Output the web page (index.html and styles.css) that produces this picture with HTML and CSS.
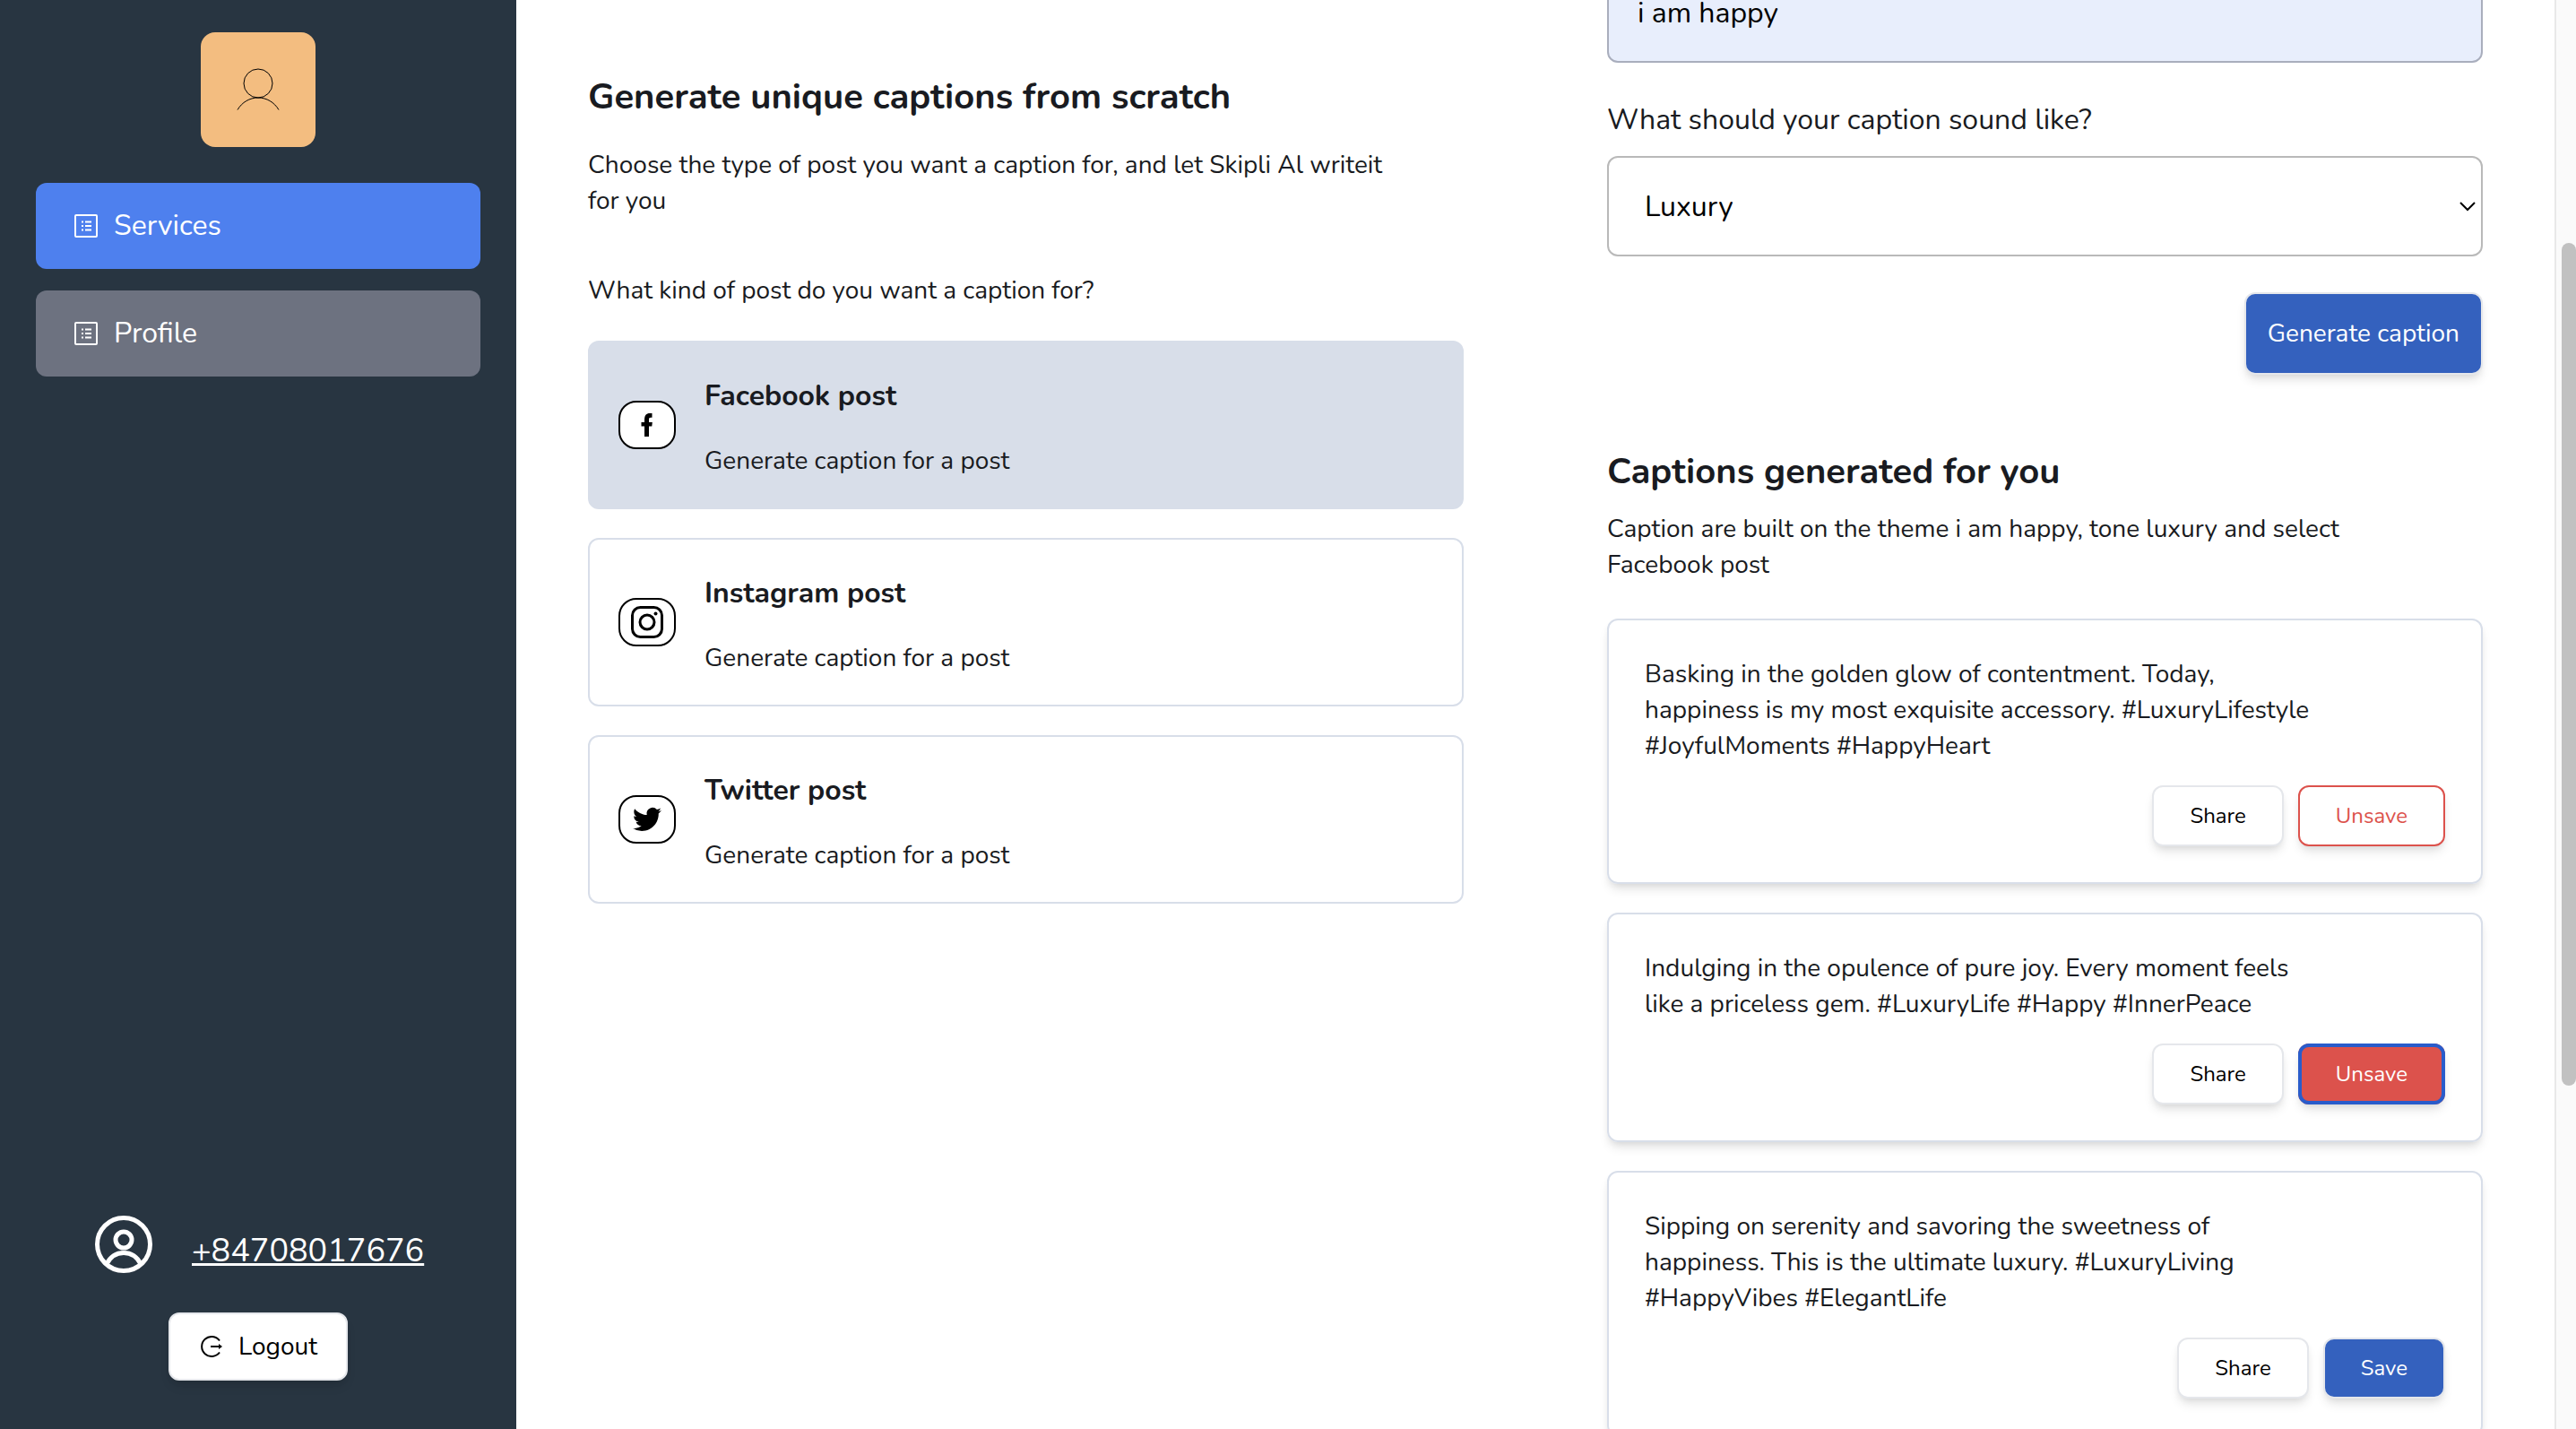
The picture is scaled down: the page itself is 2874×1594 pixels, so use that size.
FILE: index.html
```html
<!DOCTYPE html>
<html lang="en">
<head>
<meta charset="utf-8">
<title>Skipli AI - Services</title>
<link rel="stylesheet" href="styles.css">
</head>
<body>
<div class="app">
  <aside class="sidebar">
    <div class="avatar">
      <svg viewBox="0 0 48 48" width="48" height="48" fill="none" stroke="#000" stroke-width="1"><circle cx="24" cy="17" r="16"/><path d="M1 46.500C6 38 14.500 33 24 33s18 5 23 13.500"/></svg>
    </div>
    <nav class="nav">
      <a class="nav-item active" href="#services">
        <svg class="nav-icon" viewBox="0 0 26 26" width="26" height="26" fill="none" stroke="currentColor" stroke-width="2"><rect x="1" y="1" width="24" height="24" rx="1"/><path d="M12 8.500h7M12 13h7M12 17.500h7M8 8.500h2M8 13h2M8 17.500h2"/></svg>
        Services
      </a>
      <a class="nav-item" href="#profile">
        <svg class="nav-icon" viewBox="0 0 26 26" width="26" height="26" fill="none" stroke="currentColor" stroke-width="2"><rect x="1" y="1" width="24" height="24" rx="1"/><path d="M12 8.500h7M12 13h7M12 17.500h7M8 8.500h2M8 13h2M8 17.500h2"/></svg>
        Profile
      </a>
    </nav>
    <div class="account">
      <a class="phone" href="#account">
        <svg viewBox="0 0 64 64" width="64" height="64" fill="none" stroke="currentColor" stroke-width="5"><circle cx="32" cy="32" r="29.500"/><circle cx="32" cy="27" r="9"/><path d="M13 54c4-8 11-12.500 19-12.500S47 46 51 54"/></svg>
        <span class="phone-number">+84708017676</span>
      </a>
      <button class="btn logout" type="button">
        <svg viewBox="0 0 24 24" width="24" height="24" fill="none" stroke="#000" stroke-width="2"><path d="M21 5.500A11 11 0 1 0 21 18.500M11 12h10"/><path d="M20 9l4 3-4 3z" fill="#000" stroke="none"/></svg>
        Logout
      </button>
    </div>
  </aside>

  <main class="content">
    <section class="column picker">
      <h1 class="title">Generate unique captions from scratch</h1>
      <p class="text intro">Choose the type of post you want a caption for, and let Skipli Al writeit<br>for you</p>
      <p class="text question">What kind of post do you want a caption for?</p>
      <div class="post-list">
        <button class="post selected" type="button">
          <span class="post-icon"><svg viewBox="0 0 36 36" width="36" height="36"><path d="M15 31V19.500h-3.500v-4.500H15v-3c0-4.500 2-7 6-7h2.500v4.800H22c-1.500 0-2 .7-2 2V15h3.800l-.5 4.500H20V31z"/></svg></span>
          <span class="post-body"><span class="post-title">Facebook post</span><span class="text">Generate caption for a post</span></span>
        </button>
        <button class="post" type="button">
          <span class="post-icon"><svg viewBox="0 0 36 36" width="36" height="36" fill="none" stroke="#000" stroke-width="3"><rect x="1.500" y="1.500" width="33" height="33" rx="9"/><circle cx="18" cy="18" r="8"/><circle cx="27.500" cy="8.500" r="2" fill="#000" stroke="none"/></svg></span>
          <span class="post-body"><span class="post-title">Instagram post</span><span class="text">Generate caption for a post</span></span>
        </button>
        <button class="post" type="button">
          <span class="post-icon"><svg viewBox="0 0 24 24" width="32" height="32"><path d="M23.950 4.570a10 10 0 0 1-2.820.78 4.960 4.960 0 0 0 2.160-2.720c-.95.550-2 .95-3.130 1.180a4.920 4.920 0 0 0-8.380 4.480C7.690 8.090 4.070 6.130 1.640 3.160a4.820 4.820 0 0 0-.67 2.480c0 1.710.87 3.210 2.190 4.100a4.900 4.900 0 0 1-2.230-.620v.060a4.920 4.920 0 0 0 3.950 4.830 5 5 0 0 1-2.210.080 4.940 4.940 0 0 0 4.600 3.420A9.870 9.870 0 0 1 0 19.540a14 14 0 0 0 7.550 2.210c9.050 0 14-7.500 14-13.980 0-.210 0-.420-.020-.630a9.940 9.940 0 0 0 2.460-2.550z"/></svg></span>
          <span class="post-body"><span class="post-title">Twitter post</span><span class="text">Generate caption for a post</span></span>
        </button>
      </div>
    </section>

    <section class="column results">
      <form class="form">
        <input class="field theme" type="text" value="i am happy" aria-label="Caption theme">
        <label class="label" for="tone">What should your caption sound like?</label>
        <div class="select-wrap">
          <select class="field tone" id="tone"><option>Luxury</option></select>
          <svg class="chevron" viewBox="0 0 18 12" width="18" height="12" fill="none" stroke="#000" stroke-width="2"><path d="M1 2l8 8 8-8"/></svg>
        </div>
        <button class="btn primary generate" type="button">Generate caption</button>
      </form>

      <h2 class="title">Captions generated for you</h2>
      <p class="text summary">Caption are built on the theme i am happy, tone luxury and select<br>Facebook post</p>

      <div class="captions">
        <article class="caption">
          <p class="text">Basking in the golden glow of contentment. Today,<br>happiness is my most exquisite accessory. #LuxuryLifestyle<br>#JoyfulMoments #HappyHeart</p>
          <div class="actions"><button class="btn small" type="button">Share</button><button class="btn small danger" type="button">Unsave</button></div>
        </article>
        <article class="caption">
          <p class="text">Indulging in the opulence of pure joy. Every moment feels<br>like a priceless gem. #LuxuryLife #Happy #InnerPeace</p>
          <div class="actions"><button class="btn small" type="button">Share</button><button class="btn small danger focused" type="button">Unsave</button></div>
        </article>
        <article class="caption">
          <p class="text">Sipping on serenity and savoring the sweetness of<br>happiness. This is the ultimate luxury. #LuxuryLiving<br>#HappyVibes #ElegantLife</p>
          <div class="actions"><button class="btn small" type="button">Share</button><button class="btn small primary" type="button">Save</button></div>
        </article>
      </div>
    </section>
  </main>

  <div class="scrollbar"><div class="thumb"></div></div>
</div>
</body>
</html>
```
FILE: styles.css
```css
* { box-sizing: border-box; }

body {
  margin: 0;
  background: #fff;
  color: #191b21;
  font-family: Nunito, Lato, sans-serif;
  font-size: 28px;
  line-height: 40px;
}

h1, h2, p { margin: 0; }
svg { display: block; flex: none; }
button, input, select { font: inherit; color: #000; }

.app {
  display: grid;
  grid-template-columns: 576px 1fr 24px;
  height: 100vh;
  overflow: hidden;
}

/* Sidebar */
.sidebar {
  display: flex;
  flex-direction: column;
  align-items: center;
  padding: 36px 40px 54px;
  background: #283541;
  color: #fff;
}

.avatar {
  display: grid;
  place-items: center;
  width: 128px;
  height: 128px;
  border-radius: 16px;
  background: #f3bd80;
}

.nav {
  display: flex;
  flex-direction: column;
  gap: 24px;
  width: 100%;
  margin-top: 40px;
}

.nav-item {
  display: flex;
  align-items: center;
  gap: 18px;
  height: 96px;
  padding: 0 43px;
  border-radius: 12px;
  background: #6d7280;
  color: #fff;
  font-size: 32px;
  text-decoration: none;
}
.nav-item.active { background: #4e80ee; }

.account {
  display: flex;
  flex-direction: column;
  align-items: center;
  gap: 44px;
  margin-top: auto;
}

.phone {
  display: flex;
  gap: 44px;
  width: 364px;
  color: #fff;
  font-size: 36px;
  text-decoration: none;
}
.phone-number {
  padding-top: 20px;
  text-decoration: underline;
  text-decoration-thickness: 3px;
}

/* Buttons */
.btn {
  border: 2px solid #e5e7eb;
  border-radius: 12px;
  background: #fff;
  box-shadow: 0 8px 12px -2px rgba(0, 0, 0, 0.1), 0 4px 8px -4px rgba(0, 0, 0, 0.1);
}
.btn.small { height: 68px; padding: 0 40px; font-size: 24px; }
.btn.primary { background: #3461be; color: #fff; }
.btn.danger { border-color: #dc524c; color: #dc524c; }
.btn.focused {
  border-color: #dc524c;
  background: #dc524c;
  color: #fff;
  outline: 4px solid #295ccb;
  outline-offset: -4px;
}

.logout {
  display: flex;
  align-items: center;
  gap: 18px;
  height: 76px;
  padding: 0 32px 0 34px;
}

/* Content */
.content {
  display: grid;
  grid-template-columns: 1fr 1fr;
  overflow: hidden;
}
.column { padding: 0 80px; }

.title { font-size: 40px; font-weight: 700; line-height: 56px; }

.picker { padding-top: 80px; }
.intro { margin-top: 28px; }
.question { margin-top: 60px; }

.post-list {
  display: grid;
  gap: 32px;
  margin-top: 36px;
}

.post {
  display: flex;
  align-items: center;
  gap: 32px;
  height: 188px;
  padding: 0 32px;
  border: 2px solid #d8dee9;
  border-radius: 12px;
  background: #fff;
  color: inherit;
  text-align: left;
}
.post.selected { background: #d8dee9; }

.post-icon {
  display: grid;
  place-items: center;
  width: 64px;
  height: 54px;
  border: 2px solid #000;
  border-radius: 20px;
  background: #fff;
}

.post-body { display: grid; gap: 32px; padding-top: 8px; }
.post-title { font-size: 32px; font-weight: 700; }

/* The form starts above the visible part of the scrolled column */
.results { margin-top: -42px; }

.form { display: flex; flex-direction: column; }

.field {
  width: 100%;
  height: 112px;
  border: 2px solid #b9b9b9;
  border-radius: 12px;
  background: #fff;
  font-size: 32px;
}
.theme { padding: 0 32px; border-color: #a9aebd; background: #e8eefc; }
.tone { padding: 2px 40px 0; appearance: none; }

.label {
  margin: 40px 0 16px;
  font-size: 32px;
  line-height: 48px;
}

.select-wrap { display: grid; align-items: center; }
.select-wrap > * { grid-area: 1 / 1; }
.chevron { justify-self: end; margin-right: 8px; pointer-events: none; }

.generate {
  align-self: flex-end;
  height: 92px;
  margin: 40px 0 80px;
  padding: 0 24px;
}

.summary { margin-top: 16px; }

.captions {
  display: grid;
  gap: 32px;
  margin-top: 40px;
}
.caption {
  padding: 40px;
  border: 2px solid #d8dee9;
  border-radius: 12px;
  box-shadow: 0 8px 12px -2px rgba(0, 0, 0, 0.1), 0 4px 8px -4px rgba(0, 0, 0, 0.1);
}
.actions {
  display: flex;
  justify-content: flex-end;
  gap: 16px;
  margin-top: 24px;
}

/* Scrollbar */
.scrollbar {
  padding: 17vh 0 0 6px;
  border-left: 2px solid #e8e8e8;
  background: #fafafa;
}
.thumb {
  height: 59vh;
  border-radius: 8px;
  background: #c1c1c1;
}
```
